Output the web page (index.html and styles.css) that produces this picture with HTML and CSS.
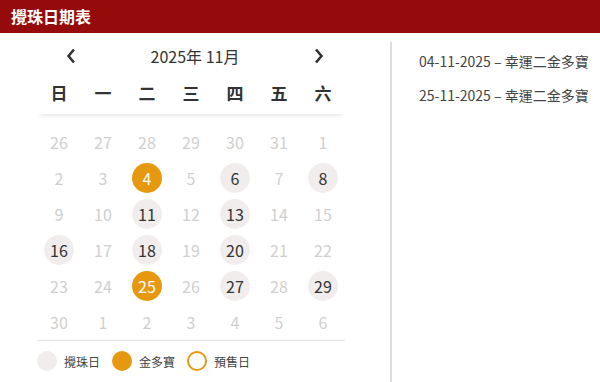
FILE: index.html
```html
<!DOCTYPE html>
<html lang="zh-Hant">
<head>
<meta charset="utf-8">
<link rel="stylesheet" href="styles.css">
</head>
<body>
<header class="bar">攪珠日期表</header>
<main class="body">
  <section class="cal-panel">
    <div class="cal">
      <div class="nav">
        <span class="chev"><svg width="10" height="16" viewBox="0 0 10 16"><path d="M8 1.5 L2.5 8 L8 14.5" fill="none" stroke="#333" stroke-width="2.6"/></svg></span>
        <span class="month">2025年 11月</span>
        <span class="chev"><svg width="10" height="16" viewBox="0 0 10 16"><path d="M2 1.5 L7.5 8 L2 14.5" fill="none" stroke="#333" stroke-width="2.6"/></svg></span>
      </div>
      <div class="week">
        <span>日</span><span>一</span><span>二</span><span>三</span><span>四</span><span>五</span><span>六</span>
      </div>
      <div class="days">
        <span class="d">26</span><span class="d">27</span><span class="d">28</span><span class="d">29</span><span class="d">30</span><span class="d">31</span><span class="d">1</span>
        <span class="d">2</span><span class="d">3</span><span class="d jp">4</span><span class="d">5</span><span class="d draw">6</span><span class="d">7</span><span class="d draw">8</span>
        <span class="d">9</span><span class="d">10</span><span class="d draw">11</span><span class="d">12</span><span class="d draw">13</span><span class="d">14</span><span class="d">15</span>
        <span class="d draw">16</span><span class="d">17</span><span class="d draw">18</span><span class="d">19</span><span class="d draw">20</span><span class="d">21</span><span class="d">22</span>
        <span class="d">23</span><span class="d">24</span><span class="d jp">25</span><span class="d">26</span><span class="d draw">27</span><span class="d">28</span><span class="d draw">29</span>
        <span class="d">30</span><span class="d">1</span><span class="d">2</span><span class="d">3</span><span class="d">4</span><span class="d">5</span><span class="d">6</span>
      </div>
      <div class="legend">
        <span class="dot dot-draw"></span><span class="lab">攪珠日</span>
        <span class="dot dot-jp"></span><span class="lab">金多寶</span>
        <span class="dot dot-pre"></span><span class="lab">預售日</span>
      </div>
    </div>
  </section>
  <aside class="list">
    <p>04-11-2025 – 幸運二金多寶</p>
    <p>25-11-2025 – 幸運二金多寶</p>
  </aside>
</main>
</body>
</html>
```
FILE: styles.css
```css
* { box-sizing: border-box; }
html, body { margin: 0; padding: 0; background: #fff; }
body {
  width: 600px;
  height: 382px;
  overflow: hidden;
  font-family: "Noto Sans CJK TC", "Noto Sans", sans-serif;
  color: #333;
}
.bar {
  height: 33px;
  background: #950b0b;
  color: #fff;
  font-weight: 700;
  font-size: 16px;
  line-height: 33px;
  padding-left: 11px;
}
.body {
  display: flex;
  height: 349px;
}
.cal-panel {
  width: 392px;
  border-right: 2px solid #dcdcdc;
  margin-top: 9px;
  padding-left: 37px;
}
.cal { width: 308px; }
.nav {
  display: flex;
  align-items: center;
  justify-content: space-between;
  height: 28px;
  padding: 0 21px 0 29px;
}
.chev { display: flex; width: 10px; height: 16px; }
.month { font-size: 16px; color: #333; line-height: 26px; }
.week {
  display: grid;
  grid-template-columns: repeat(7, 44px);
  height: 44px;
  padding-top: 1px;
  align-items: center;
  justify-items: center;
  font-size: 17px;
  font-weight: 700;
  color: #333;
  box-shadow: 0 5px 5px -4px rgba(0,0,0,0.14);
}
.days {
  display: grid;
  grid-template-columns: repeat(7, 44px);
  grid-auto-rows: 36px;
  align-items: center;
  justify-items: center;
  padding-top: 10px;
  border-bottom: 1px solid #e3e3e3;
}
.d {
  width: 30px;
  height: 30px;
  border-radius: 50%;
  display: flex;
  align-items: center;
  justify-content: center;
  font-size: 16px;
  color: #cfcfcf;
}
.d.draw { background: #f1eded; color: #333; }
.d.jp { background: #e6980f; color: #fff; }
.legend {
  display: flex;
  align-items: center;
  height: 40px;
}
.dot {
  width: 20px;
  height: 20px;
  border-radius: 50%;
  flex: none;
}
.dot-draw { background: #f1eded; }
.dot-jp { background: #e6980f; }
.dot-pre { border: 2px solid #e6980f; background: #fff; }
.lab {
  font-size: 12px;
  color: #444;
  margin: 0 12px 0 7px;
}
.list {
  padding-left: 27px;
  padding-top: 18px;
}
.list p {
  margin: 0 0 14px;
  font-size: 14px;
  line-height: 20px;
  color: #444;
  white-space: nowrap;
}
```
